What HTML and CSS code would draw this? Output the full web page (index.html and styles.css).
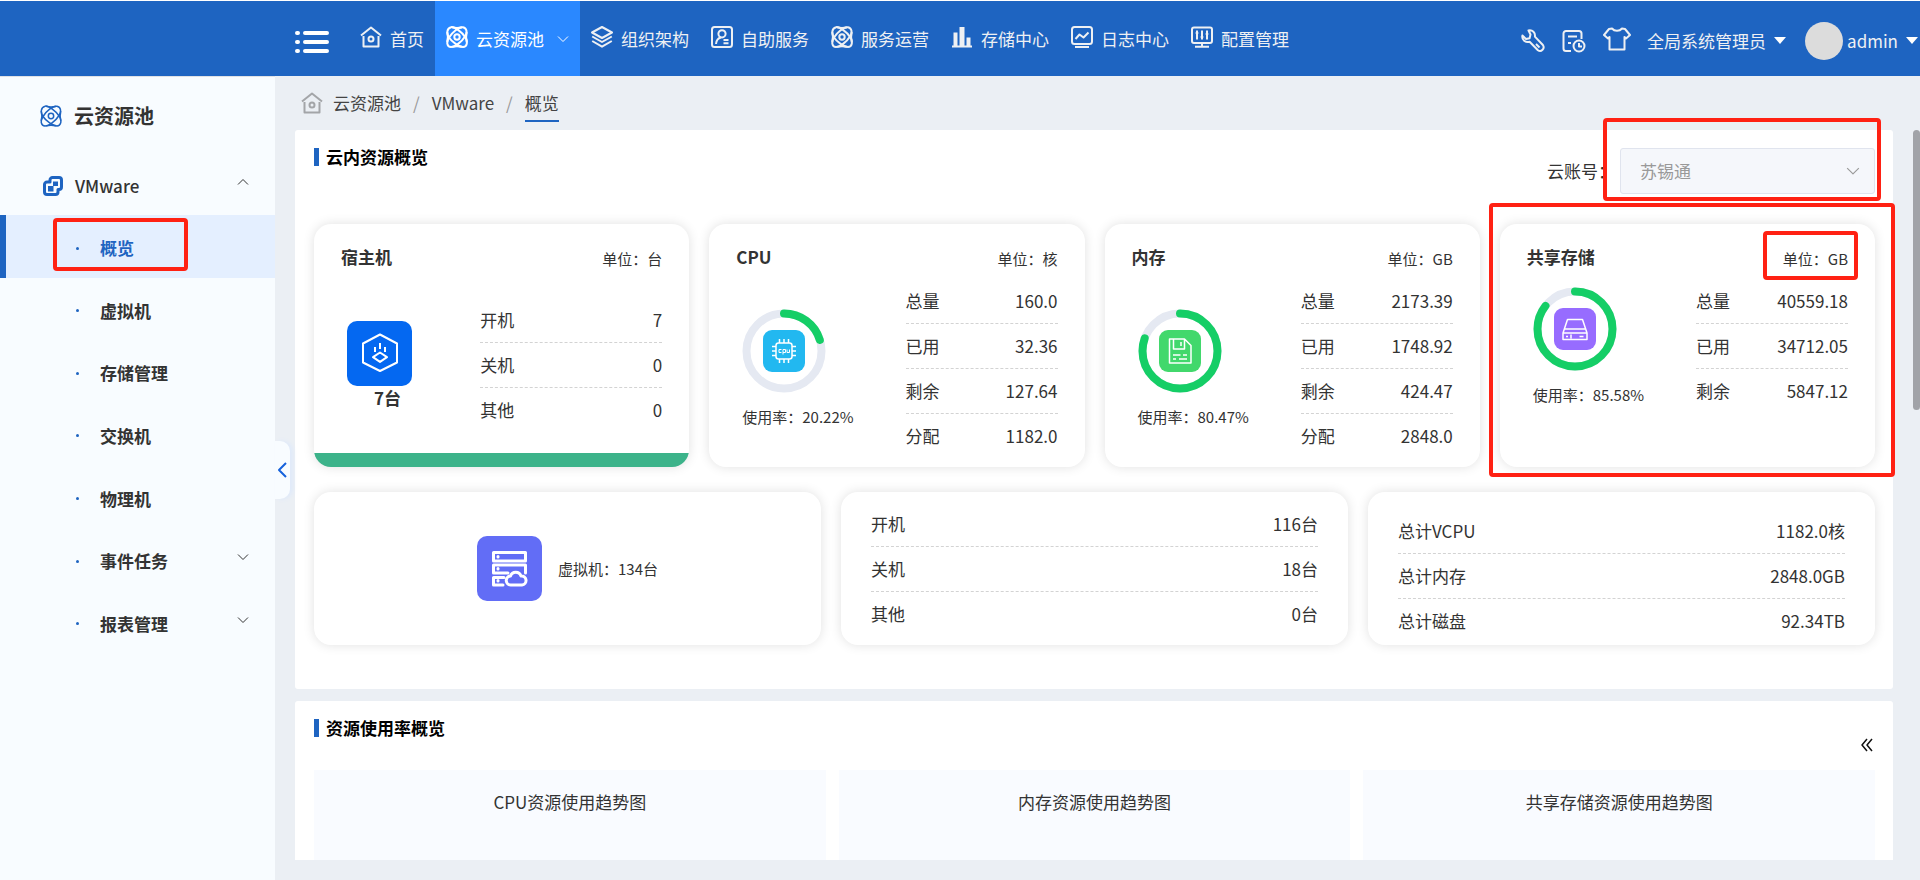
FILE: index.html
```html
<!DOCTYPE html>
<html lang="zh-CN">
<head>
<meta charset="utf-8">
<title>云资源池 - 概览</title>
<link rel="stylesheet" href="styles.css">
</head>
<body>
<svg class="sprite" aria-hidden="true">
  <symbol id="i-home" viewBox="0 0 22 22"><path d="M1 9.5 11 1.5 21 9.5M3.500 10v10.500h15V10" /><circle cx="11" cy="13" r="2.500"/></symbol>
  <symbol id="i-atom" viewBox="0 0 22 22"><path d="M5 1.200C8 .2 16 6 19.500 11.500 22 16 21 21 17 21 13 21 6 16 3 11.500 .5 7.500 .5 2.500 5 1.200Z"/><path d="M17 1.200C21 2 21.500 6.500 19 10.500 16 15.500 9 21 5 21 .8 21 .2 16 3 11.500 6 6.500 13 .5 17 1.200Z"/><path d="M6 1.200Q11 2.600 16 1.200M6 20.900Q11 19.400 16 20.900M1.200 6Q2.600 11 1.200 16M20.800 6Q19.400 11 20.800 16"/><circle cx="11" cy="11" r="2.700"/></symbol>
  <symbol id="i-layers" viewBox="0 0 22 22"><path d="M11 1 21 6.500 11 12 1 6.500Z"/><path d="M1.200 10.500 11 16l9.800-5.500M1.200 15 11 20.700 20.800 15"/></symbol>
  <symbol id="i-user" viewBox="0 0 22 22"><rect x="1" y="1" width="20" height="20" rx="2.500"/><circle cx="11" cy="7.800" r="3.600"/><path d="M5 18c.3-3.500 2-6 5-6.600M12.500 14h5M12.500 17.200h5"/></symbol>
  <symbol id="i-bars" viewBox="0 0 22 22"><path d="M1 20.500h20"/><path class="solid" d="M2.500 6.500h4v14h-4zM8.500 1h5v19.500h-5zM15.500 11.500h4v9h-4z"/></symbol>
  <symbol id="i-log" viewBox="0 0 22 22"><rect x="1" y="1" width="20" height="17" rx="2.500"/><path d="m4.500 13 4-4.500 4 3 5-5M4 21h14"/></symbol>
  <symbol id="i-conf" viewBox="0 0 22 22"><rect x="1" y="1.500" width="20" height="15.500" rx="2"/><path d="M6 4.500v9M11 4.500v9M16 4.500v9M4.700 7h2.600M9.700 11h2.600M14.700 8h2.600M11 17v3M4 20.800h14"/></symbol>
  <symbol id="i-down" viewBox="0 0 12 12"><path d="m1 3.500 5 5 5-5"/></symbol>
  <symbol id="i-up" viewBox="0 0 12 12"><path d="m1 8.500 5-5 5 5"/></symbol>
</svg>

<header class="topbar">
  <button class="menu-btn" aria-label="折叠菜单"><svg viewBox="0 0 34 22"><path d="M2 2h1M10 2h22M2 11h1M10 11h22M2 20h1M10 20h22"/></svg></button>
  <nav class="topnav">
    <a href="#"><svg class="icon"><use href="#i-home"/></svg>首页</a>
    <a href="#" class="active"><svg class="icon"><use href="#i-atom"/></svg>云资源池<svg class="chev"><use href="#i-down"/></svg></a>
    <a href="#"><svg class="icon"><use href="#i-layers"/></svg>组织架构</a>
    <a href="#"><svg class="icon"><use href="#i-user"/></svg>自助服务</a>
    <a href="#"><svg class="icon"><use href="#i-atom"/></svg>服务运营</a>
    <a href="#"><svg class="icon"><use href="#i-bars"/></svg>存储中心</a>
    <a href="#"><svg class="icon"><use href="#i-log"/></svg>日志中心</a>
    <a href="#"><svg class="icon"><use href="#i-conf"/></svg>配置管理</a>
  </nav>
  <div class="tools">
    <button class="tool" aria-label="工具"><svg class="icon" viewBox="0 0 24 24"><path d="M7.500 1.500c4-.8 7 2.200 6.400 6.100l8 8.400c2.300 3.400-1.700 7.600-5 5.200l-8.300-8.500C4.500 14 .6 10.700 1.400 6.600L5 10l3.600-.8L9.500 5.500Z"/><path d="m15 15 3.500 3.500"/></svg></button>
    <button class="tool" aria-label="任务"><svg class="icon" viewBox="0 0 24 24"><path d="M9 22H4a2.500 2.500 0 0 1-2.500-2.500v-15A2.500 2.500 0 0 1 4 2h13a2.500 2.500 0 0 1 2.500 2.500V10M6 7.500h9M6 14h3"/><circle cx="17" cy="17" r="5.500"/><path d="M17 14v3.500h3"/></svg></button>
    <button class="tool shirt" aria-label="主题"><svg class="icon" viewBox="0 0 28 24"><path d="M9 1.500c2.500 3 7.500 3 10 0l3 .5 5 6-4 3.500-1.500-1.500V22.500h-15V10L5 11.500 1 8l5-6Z"/></svg></button>
    <button class="role">全局系统管理员<span class="caret"></span></button>
    <button class="account"><span class="avatar"></span>admin<span class="caret"></span></button>
  </div>
</header>

<div class="shell">
  <aside class="sidebar">
    <h1 class="side-title"><svg class="icon"><use href="#i-atom"/></svg>云资源池</h1>
    <a href="#" class="side-group"><svg class="vm" viewBox="0 0 20 20"><path d="M7 5V4a2.500 2.500 0 0 1 2.500-2.500H16A2.500 2.500 0 0 1 18.500 4v7a2.500 2.500 0 0 1-2.500 2.500h-1V16a2.500 2.500 0 0 1-2.500 2.500H4A2.500 2.500 0 0 1 1.500 16V8.500A2.500 2.500 0 0 1 4 6h3Z"/><path class="solid" d="M5 10h5.500v5.500H5zM10 5.500h5V10h-5z"/></svg>VMware<svg class="chev"><use href="#i-up"/></svg></a>
    <ul class="side-list">
      <li><a href="#" class="current">概览<span class="mark mark-side"></span></a></li>
      <li><a href="#">虚拟机</a></li>
      <li><a href="#">存储管理</a></li>
      <li><a href="#">交换机</a></li>
      <li><a href="#">物理机</a></li>
      <li><a href="#">事件任务<svg class="chev"><use href="#i-down"/></svg></a></li>
      <li><a href="#">报表管理<svg class="chev"><use href="#i-down"/></svg></a></li>
    </ul>
    <button class="handle" aria-label="收起侧栏"><svg viewBox="0 0 10 16"><path d="M9 1 2 8l7 7"/></svg></button>
  </aside>

  <main class="content">
    <nav class="crumbs">
      <svg class="icon"><use href="#i-home"/></svg>
      <a href="#">云资源池</a><span class="sep">/</span><a href="#">VMware</a><span class="sep">/</span><a href="#" class="here">概览</a>
    </nav>

    <section class="panel">
      <div class="panel-head">
        <h2>云内资源概览</h2>
        <div class="field">
          <label for="acct">云账号：</label>
          <div class="select"><select id="acct" disabled><option>苏锡通</option></select><svg class="chev"><use href="#i-down"/></svg><span class="mark mark-select"></span></div>
        </div>
      </div>

      <div class="cards four">
        <article class="card bar">
          <header><h3>宿主机</h3><span class="unit">单位：台</span></header>
          <div class="body host">
            <div class="figure">
              <svg class="tile" viewBox="0 0 65 65"><rect class="t-blue" width="65" height="65" rx="10"/><path d="M33 13.500 50 22.500v19L33 50 16 41.500v-19ZM33 31.500l7 4.700-7 4.700-7-4.700ZM33 22v6M28 26v5M38 26v5"/></svg>
              <strong>7台</strong>
            </div>
            <dl><div><dt>开机</dt><dd>7</dd></div><div><dt>关机</dt><dd>0</dd></div><div><dt>其他</dt><dd>0</dd></div></dl>
          </div>
        </article>
        <article class="card">
          <header><h3>CPU</h3><span class="unit">单位：核</span></header>
          <div class="body">
            <div class="figure">
              <svg class="ring" viewBox="0 0 84 84"><circle class="track" cx="42" cy="42" r="37.500"/><circle class="value" cx="42" cy="42" r="37.500" pathLength="100" stroke-dasharray="20.220 100"/><rect class="t-cyan" x="21" y="21" width="42" height="42" rx="9"/><g class="glyph"><rect x="34" y="34" width="16" height="16" rx="2.500"/><path d="M37.500 30v4M42 30v4M46.500 30v4M37.500 50v4M42 50v4M46.500 50v4M30 37.500h4M30 42h4M30 46.500h4M50 37.500h4M50 42h4M50 46.500h4"/><path class="thin" d="M39.500 40.500h-2.500v3h2.500M41 45.500v-5h2.500v3H41M45 40.500v3h2.500v-3"/></g></svg>
              <span>使用率：20.22%</span>
            </div>
            <dl><div><dt>总量</dt><dd>160.0</dd></div><div><dt>已用</dt><dd>32.36</dd></div><div><dt>剩余</dt><dd>127.64</dd></div><div><dt>分配</dt><dd>1182.0</dd></div></dl>
          </div>
        </article>
        <article class="card">
          <header><h3>内存</h3><span class="unit">单位：GB</span></header>
          <div class="body">
            <div class="figure">
              <svg class="ring" viewBox="0 0 84 84"><circle class="track" cx="42" cy="42" r="37.500"/><circle class="value" cx="42" cy="42" r="37.500" pathLength="100" stroke-dasharray="80.470 100"/><rect class="t-green" x="21" y="21" width="42" height="42" rx="9"/><g class="glyph"><path d="M32 30h14.500l6.500 6.500V54H31.500V30ZM35.500 30v10h11V30M43 33v4M35 46h7.500M45 46h4M35 50h3M41 50h8"/></g></svg>
              <span>使用率：80.47%</span>
            </div>
            <dl><div><dt>总量</dt><dd>2173.39</dd></div><div><dt>已用</dt><dd>1748.92</dd></div><div><dt>剩余</dt><dd>424.47</dd></div><div><dt>分配</dt><dd>2848.0</dd></div></dl>
          </div>
        </article>
        <article class="card">
          <header><h3>共享存储</h3><span class="unit">单位：GB<span class="mark mark-unit"></span></span></header>
          <div class="body">
            <div class="figure">
              <svg class="ring" viewBox="0 0 84 84"><circle class="track" cx="42" cy="42" r="37.500"/><circle class="value" cx="42" cy="42" r="37.500" pathLength="100" stroke-dasharray="85.580 100"/><rect class="t-purple" x="21" y="21" width="42" height="42" rx="9"/><g class="glyph"><path d="M34.500 32.500h15L54 46v6.500H30V46ZM31.500 42h21M30 46h24M33 49.500h2M38 47.500v4M46.500 49.500h4"/></g></svg>
              <span>使用率：85.58%</span>
            </div>
            <dl><div><dt>总量</dt><dd>40559.18</dd></div><div><dt>已用</dt><dd>34712.05</dd></div><div><dt>剩余</dt><dd>5847.12</dd></div></dl>
          </div>
          <span class="mark mark-card"></span>
        </article>
      </div>

      <div class="cards three">
        <article class="card vmcount">
          <svg class="tile" viewBox="0 0 65 65"><rect class="t-indigo" width="65" height="65" rx="10"/><path class="thick" d="M17 16.500h31.500v8.500H16.500v-8.500ZM48.500 37v-8h-32v8H31M27 41.500H16.500V49H26M21 20.500v.5M21 32.500v.5M21 44.500v.5"/><path class="thick" d="M34 49a4.500 4.500 0 0 1-.5-9 5.500 5.500 0 0 1 10.500 0 4.500 4.500 0 0 1 1 9Z"/></svg>
          <span>虚拟机：134台</span>
        </article>
        <article class="card wide">
          <dl><div><dt>开机</dt><dd>116台</dd></div><div><dt>关机</dt><dd>18台</dd></div><div><dt>其他</dt><dd>0台</dd></div></dl>
        </article>
        <article class="card wide totals">
          <dl><div><dt>总计VCPU</dt><dd>1182.0核</dd></div><div><dt>总计内存</dt><dd>2848.0GB</dd></div><div><dt>总计磁盘</dt><dd>92.34TB</dd></div></dl>
        </article>
      </div>
    </section>

    <section class="panel trends">
      <div class="panel-head">
        <h2>资源使用率概览</h2>
        <button class="fold" aria-label="收起"><svg viewBox="0 0 12 14"><path d="M6 1 1 7l5 6M11 1 6 7l5 6"/></svg></button>
      </div>
      <div class="charts">
        <h3>CPU资源使用趋势图</h3>
        <h3>内存资源使用趋势图</h3>
        <h3>共享存储资源使用趋势图</h3>
      </div>
    </section>
    <div class="thumb"></div>
  </main>
</div>
</body>
</html>
```
FILE: styles.css
```css
* { box-sizing: border-box; }

body {
  margin: 0;
  height: 100vh;
  display: flex;
  flex-direction: column;
  overflow: hidden;
  border-top: 1px solid #fff;
  background: #ebeff4;
  color: #333;
  font: 17px/24px "Noto Sans CJK SC", sans-serif;
}

a { color: inherit; text-decoration: none; }
button { font: inherit; color: inherit; background: none; border: 0; padding: 0; cursor: pointer; }
h1, h2, h3, ul, dl, dd { margin: 0; padding: 0; }
ul { list-style: none; }
svg { display: block; flex: none; fill: none; stroke: currentColor; stroke-linejoin: round; }
.sprite { position: absolute; width: 0; height: 0; }
.solid { fill: currentColor; stroke: none; }
.icon { width: 22px; height: 22px; stroke-width: 2; }
.chev { width: 12px; height: 12px; stroke-width: 1; }

/* top bar */
.topbar {
  flex: none;
  display: flex;
  align-items: stretch;
  height: 75px;
  padding-left: 295px;
  background: #1e64c1;
  color: #eef0f3;
}
.menu-btn { margin-top: 6px; }
.menu-btn svg { width: 34px; height: 22px; stroke: #fff; stroke-width: 4; stroke-linecap: round; }
.topnav { display: flex; margin-left: 20px; }
.topnav a { display: flex; align-items: center; gap: 8px; padding: 0 11px; white-space: nowrap; }
.topnav .icon { margin-bottom: 3px; }
.topnav .chev { margin-left: 5px; }
.topnav .active { background: #2a88ff; color: #fff; }
.tools { display: flex; align-items: center; margin-left: auto; padding: 4px 2px 0 0; }
.tool { margin-right: 17px; }
.tool .icon { width: 24px; height: 24px; }
.tool.shirt { margin: 0 16px 4px 0; }
.tool.shirt .icon { width: 28px; }
.role, .account { display: flex; align-items: center; white-space: nowrap; }
.caret { margin-left: 8px; border: 6px solid transparent; border-top: 7px solid #fff; border-bottom: 0; }
.avatar { width: 38px; height: 38px; margin: 0 4px 0 19px; border-radius: 50%; background: #dcdcdc; }

/* sidebar */
.shell { flex: 1; display: flex; min-height: 0; }
.sidebar { position: relative; flex: none; width: 275px; background: #f8fcff; border-top: 1px solid #dfe1e5; }
.side-title { display: flex; align-items: center; gap: 12px; height: 77px; padding-left: 40px; font-size: 20px; font-weight: 700; }
.side-title .icon { color: #1e64c1; stroke-width: 1.500; }
.side-group { display: flex; align-items: center; gap: 12px; height: 61px; padding: 2px 26px 0 43px; font-weight: 500; }
.side-group .chev { margin: 0 0 8px auto; }
.vm { width: 20px; height: 20px; color: #1e64c1; stroke-width: 3; }
.side-list { display: grid; grid-auto-rows: 1fr; min-height: 438px; }
.side-list a { position: relative; display: flex; align-items: center; height: 100%; padding: 4px 26px 0 76px; font-weight: 700; }
.side-list a::before { content: ""; width: 3px; height: 3px; margin-right: 21px; border-radius: 50%; background: #1e64c1; }
.side-list .chev { margin: 0 0 8px auto; }
.side-list .current { background: #e4efff; color: #1e64c1; box-shadow: inset 6px 0 #1e64c1; }
.handle {
  position: absolute;
  z-index: 1;
  top: 364px;
  left: 100%;
  width: 15px;
  height: 58px;
  border-radius: 0 10px 10px 0;
  background: #f8fcff;
  box-shadow: 3px 0 4px #dfeafa;
}
.handle svg { width: 10px; height: 16px; margin: 0 auto 0 2px; stroke: #1662dc; stroke-width: 2; }

/* content */
.content { position: relative; flex: 1; min-width: 0; display: flex; flex-direction: column; padding: 0 27px 20px 20px; }
.crumbs { flex: none; display: flex; align-items: center; height: 54px; padding-left: 6px; color: #444; }
.crumbs .icon { margin-right: 10px; color: #a3a5a8; }
.crumbs .sep { margin: 0 12px; color: #999; }
.crumbs .here { padding: 7px 0 5px; border-bottom: 2px solid #1e64c1; }

.panel { flex: none; padding: 18px 18px 44px 19px; border-radius: 3px; background: #fff; }
.panel-head { display: flex; justify-content: space-between; align-items: flex-start; margin-bottom: 30px; }
.panel h2 { display: flex; align-items: center; gap: 7px; height: 18px; font-size: 17px; font-weight: 700; color: #000; }
.panel h2::before { content: ""; width: 5px; height: 18px; background: #1e64c1; }
.field { display: flex; align-items: center; gap: 5px; }
.select { position: relative; width: 255px; color: #999; }
.select select {
  display: block;
  width: 100%;
  height: 46px;
  padding: 0 40px 0 19px;
  appearance: none;
  border: 1px solid #e0e4ee;
  border-radius: 3px;
  background: #f5f7fb;
  color: #999;
  opacity: 1;
  font: inherit;
}
.select .chev { position: absolute; right: 15px; top: 16px; width: 14px; height: 14px; }

.cards { display: grid; gap: 20px; }
.four { grid-template-columns: repeat(4, 1fr); }
.three { grid-template-columns: repeat(3, 1fr); margin-top: 25px; }
.card { position: relative; min-height: 153px; border-radius: 17px; background: #fff; box-shadow: 0 0 12px rgba(0, 0, 0, .12); }
.four .card { min-height: 243px; padding: 0 27px; }
.card header { display: flex; justify-content: space-between; align-items: center; height: 55px; padding-top: 10px; }
.card h3 { font-size: 17px; font-weight: 700; }
.unit { position: relative; padding-top: 4px; font-size: 15px; line-height: 22px; }
.body { display: flex; justify-content: space-between; align-items: center; }
.body dl { width: 152px; }
.body.host { min-height: 172px; }
.body.host dl { width: 182px; }
.bar { background: linear-gradient(#3cb38a, #3cb38a) bottom / 100% 14px no-repeat #fff; }
.figure { padding-left: 6px; font-size: 15px; }
.figure span { display: block; margin-top: 12px; }
.figure strong { display: block; padding-left: 27px; font-size: 17px; font-weight: 700; }
.ring { width: 84px; height: 84px; }
.ring circle { stroke-width: 8; }
.track { stroke: #e5e9f2; }
.value { stroke: #15ce66; stroke-linecap: round; transform: rotate(-90deg); transform-origin: center; }
.t-blue { fill: #0468f1; stroke: none; }
.t-cyan { fill: #22b8f0; stroke: none; }
.t-green { fill: #42d86c; stroke: none; }
.t-purple { fill: #976cff; stroke: none; }
.t-indigo { fill: #626df6; stroke: none; }
.glyph { stroke: #fff; stroke-width: 1.500; }
.glyph .thin { stroke-width: 1; }
.tile { width: 65px; height: 65px; stroke: #fff; stroke-width: 2; }
.tile .thick { stroke-width: 3; stroke-linecap: round; }

dl div { display: flex; justify-content: space-between; align-items: center; height: 45px; border-bottom: 1px dashed #d3d3d3; }
dl div:last-child { border-bottom-color: transparent; }
.vmcount { display: flex; justify-content: center; align-items: center; gap: 16px; font-size: 15px; }
.wide { padding: 10px 30px 0; }
.wide.totals { padding-top: 17px; }

.trends { flex: 1; min-height: 0; display: flex; flex-direction: column; margin-top: 12px; padding-bottom: 0; border-radius: 3px 3px 0 0; overflow: hidden; }
.trends .panel-head { margin-bottom: 0; min-height: 51px; }
.fold { margin: 19px 2px 0 0; color: #111; }
.fold svg { width: 12px; height: 14px; stroke-width: 1.500; }
.charts { flex: 1; display: grid; grid-template-columns: repeat(3, 1fr); gap: 13px; }
.charts h3 { padding-top: 20px; background: #f9fbff; font-size: 17px; font-weight: 400; text-align: center; }
.thumb { position: absolute; top: 54px; right: 0; width: 7px; height: 280px; border-radius: 4px; background: #a1a3a8; }

/* highlight frames */
.mark { position: absolute; z-index: 2; border: 4px solid #ff2113; border-radius: 4px; pointer-events: none; }
.mark-side { inset: 3px 87px 7px 53px; }
.mark-select { inset: -30px -6px -7px -17px; }
.mark-card { inset: -21px -20px -10px -11px; }
.mark-unit { inset: -13px -10px -10px -20px; }
```
